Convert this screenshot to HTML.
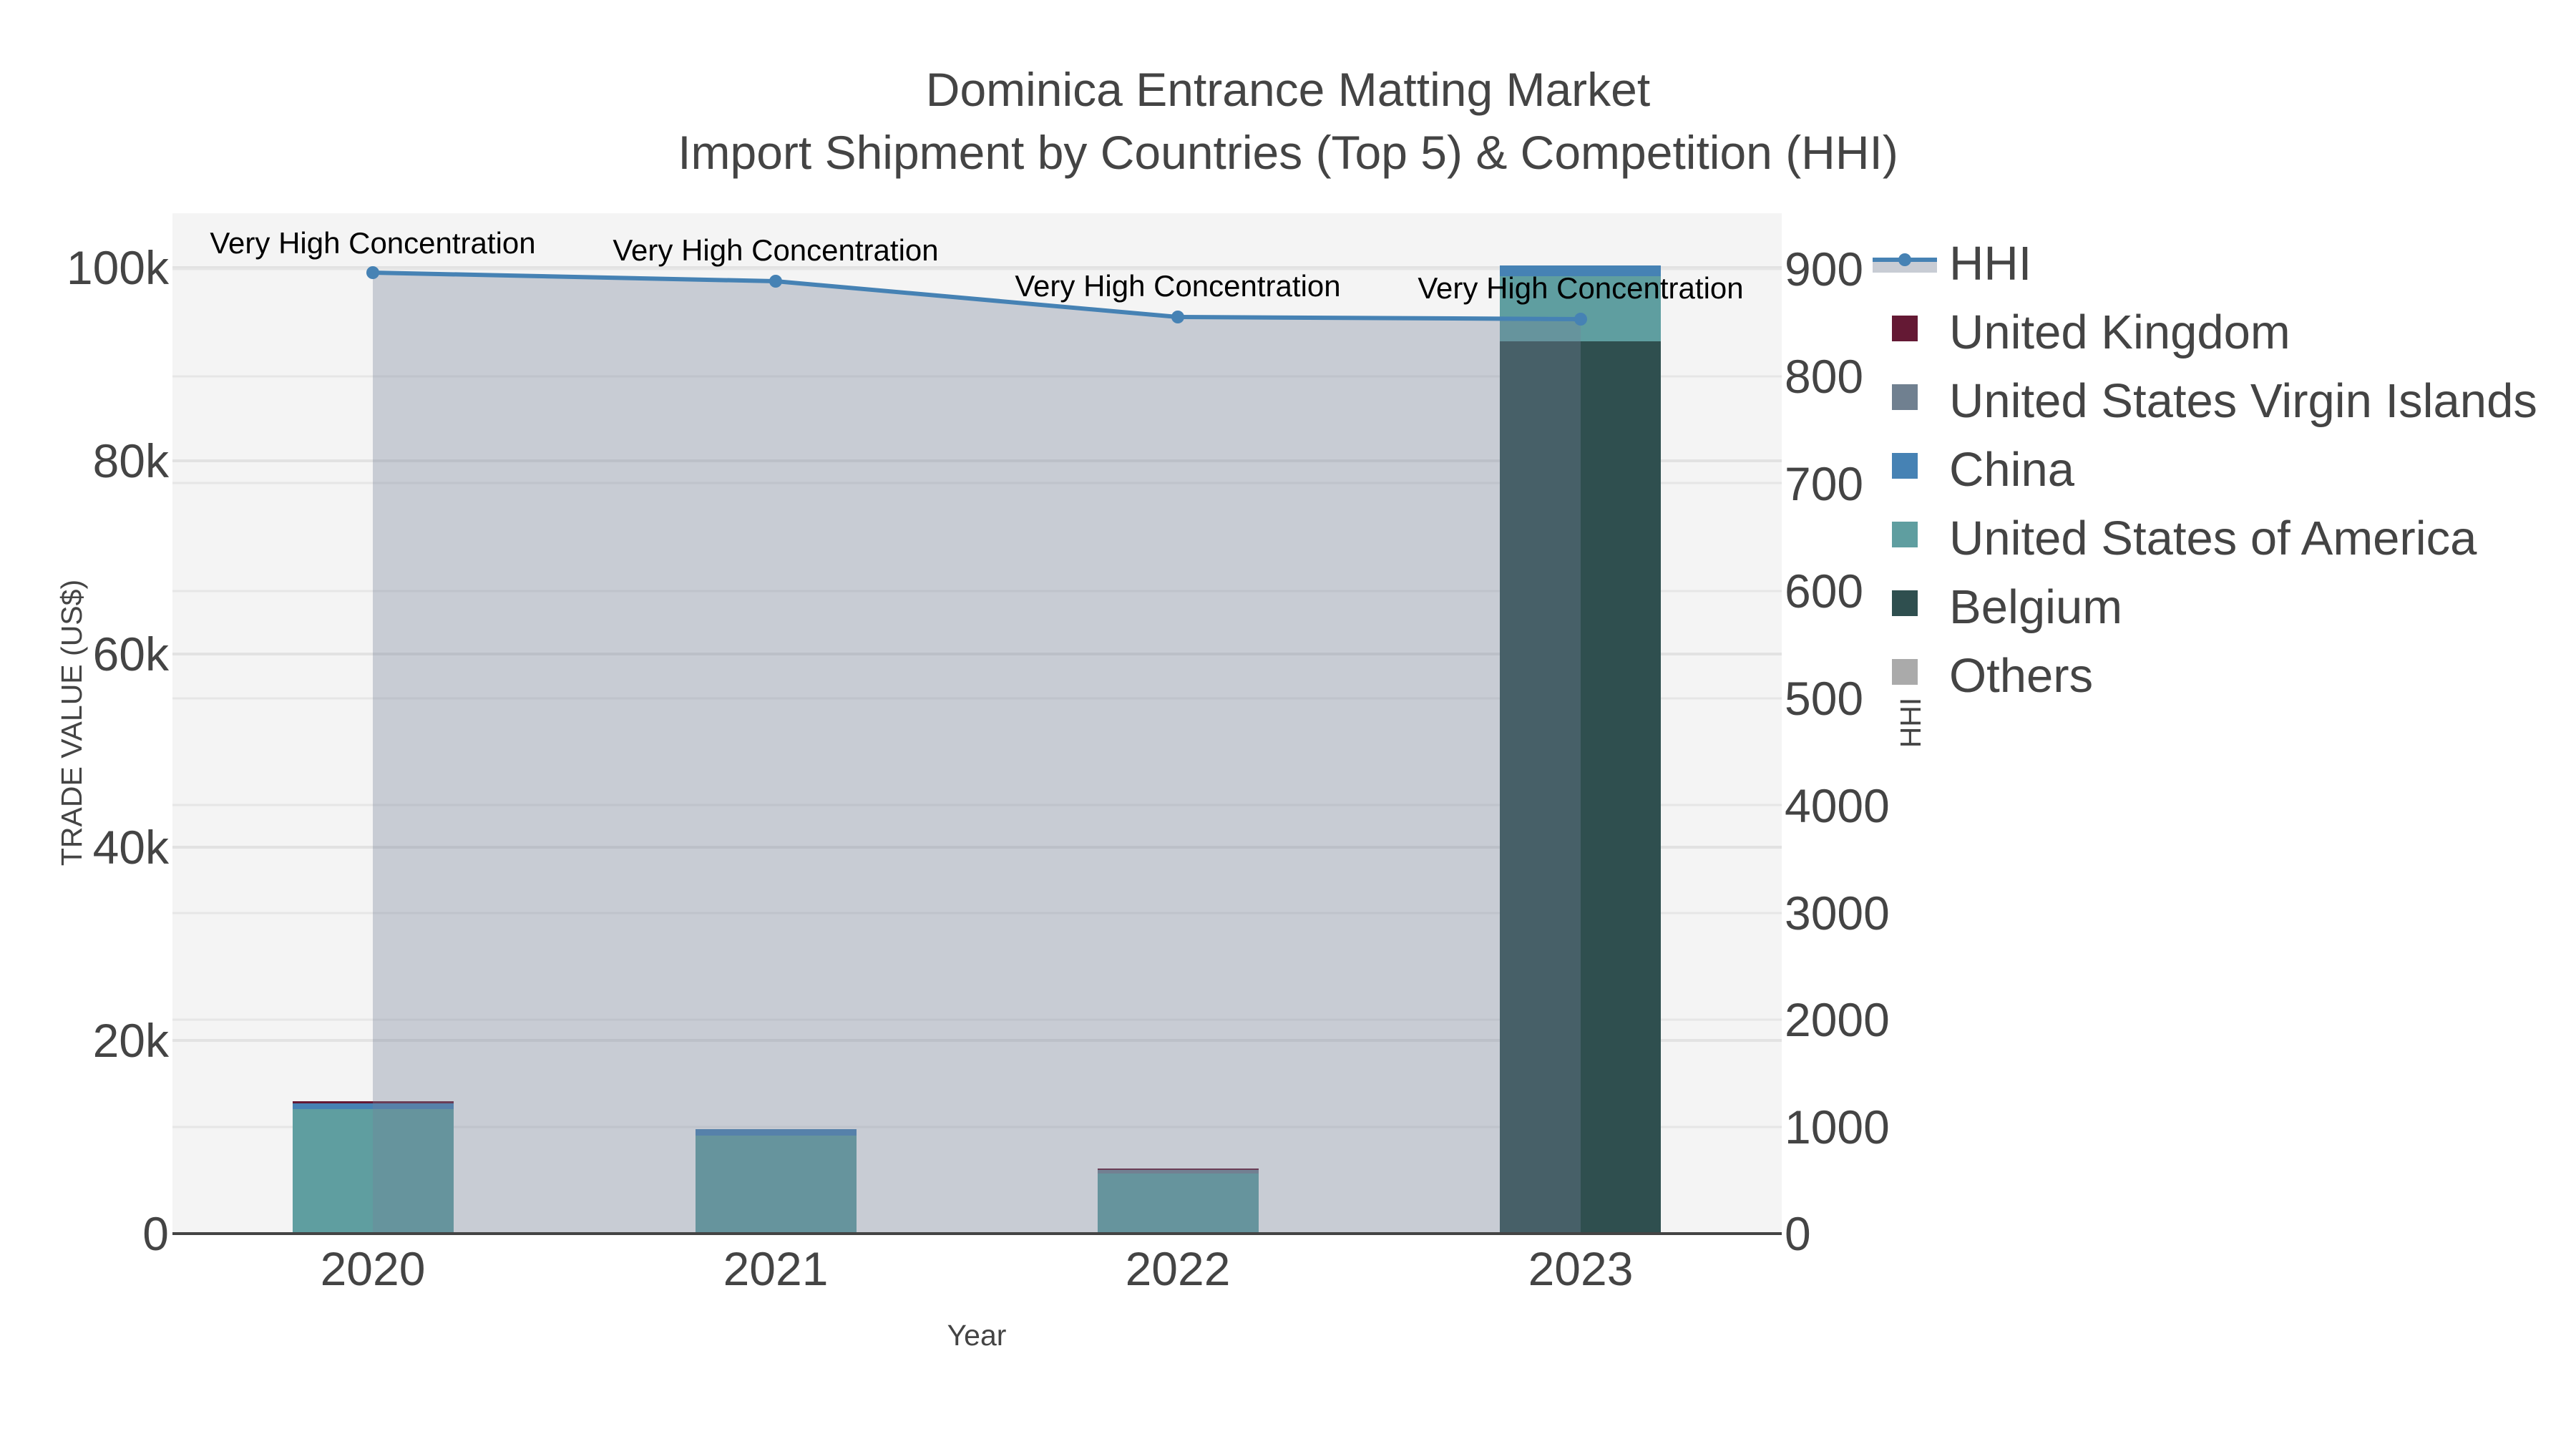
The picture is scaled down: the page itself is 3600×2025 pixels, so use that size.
<!DOCTYPE html>
<html><head><meta charset="utf-8"><style>
html,body{margin:0;padding:0;background:#fff;}
svg{display:block;font-family:"Liberation Sans",sans-serif;}
</style></head><body>
<svg width="3600" height="2025" viewBox="0 0 3600 2025" xmlns="http://www.w3.org/2000/svg">
<rect x="0" y="0" width="3600" height="2025" fill="#fff"/>
<rect x="241" y="298" width="2249" height="1426" fill="#f4f4f4"/>
<g stroke="#e2e2e2" stroke-width="4">
<line x1="241" x2="2490" y1="1454" y2="1454"/>
<line x1="241" x2="2490" y1="1184" y2="1184"/>
<line x1="241" x2="2490" y1="914" y2="914"/>
<line x1="241" x2="2490" y1="644" y2="644"/>
<line x1="241" x2="2490" y1="374" y2="374"/>
</g>
<g stroke="#e6e6e6" stroke-width="3">
<line x1="241" x2="2490" y1="1575" y2="1575"/>
<line x1="241" x2="2490" y1="1425" y2="1425"/>
<line x1="241" x2="2490" y1="1276" y2="1276"/>
<line x1="241" x2="2490" y1="1125" y2="1125"/>
<line x1="241" x2="2490" y1="976" y2="976"/>
<line x1="241" x2="2490" y1="826" y2="826"/>
<line x1="241" x2="2490" y1="675" y2="675"/>
<line x1="241" x2="2490" y1="526" y2="526"/>
<line x1="241" x2="2490" y1="376" y2="376"/>
</g>
<rect x="409" y="1539" width="225" height="3" fill="#641934"/>
<rect x="409" y="1542" width="225" height="8" fill="#4682b4"/>
<rect x="409" y="1550" width="225" height="174" fill="#5f9ea0"/>
<rect x="972" y="1578" width="225" height="9" fill="#4682b4"/>
<rect x="972" y="1587" width="225" height="137" fill="#5f9ea0"/>
<rect x="1534" y="1633" width="225" height="2" fill="#641934"/>
<rect x="1534" y="1635" width="225" height="5" fill="#708090"/>
<rect x="1534" y="1640" width="225" height="84" fill="#5f9ea0"/>
<rect x="2096" y="371" width="225" height="15" fill="#4682b4"/>
<rect x="2096" y="386" width="225" height="91" fill="#5f9ea0"/>
<rect x="2096" y="477" width="225" height="1247" fill="#2f4f4f"/>
<polygon points="521,381 1084,393 1646,443 2209,446 2209,1724 521,1724" fill="rgb(118,130,152)" fill-opacity="0.35"/>
<line x1="241" x2="2490" y1="1724" y2="1724" stroke="#444" stroke-width="4"/>
<polyline points="521,381 1084,393 1646,443 2209,446" fill="none" stroke="#4682b4" stroke-width="6"/>
<g fill="#4682b4"><circle cx="521" cy="381" r="9"/><circle cx="1084" cy="393" r="9"/><circle cx="1646" cy="443" r="9"/><circle cx="2209" cy="446" r="9"/></g>
<g font-size="42" fill="#000" text-anchor="middle">
<text x="521" y="354">Very High Concentration</text>
<text x="1084" y="364">Very High Concentration</text>
<text x="1646" y="414">Very High Concentration</text>
<text x="2209" y="417">Very High Concentration</text>
</g>
<g font-size="66" fill="#444" text-anchor="middle">
<text x="1800" y="148">Dominica Entrance Matting Market</text>
<text x="1800" y="236">Import Shipment by Countries (Top 5) &amp; Competition (HHI)</text>
</g>
<g font-size="66" fill="#444" text-anchor="end">
<text x="236" y="1747">0</text>
<text x="236" y="1477">20k</text>
<text x="236" y="1207">40k</text>
<text x="236" y="937">60k</text>
<text x="236" y="667">80k</text>
<text x="236" y="397">100k</text>
</g>
<g font-size="66" fill="#444">
<text x="2494" y="1747">0</text>
<text x="2494" y="1598">1000</text>
<text x="2494" y="1448">2000</text>
<text x="2494" y="1299">3000</text>
<text x="2494" y="1149">4000</text>
<text x="2494" y="999">500</text>
<text x="2494" y="849">600</text>
<text x="2494" y="699">700</text>
<text x="2494" y="549">800</text>
<text x="2494" y="399">900</text>
</g>
<g font-size="66" fill="#444" text-anchor="middle">
<text x="521" y="1796">2020</text>
<text x="1084" y="1796">2021</text>
<text x="1646" y="1796">2022</text>
<text x="2209" y="1796">2023</text>
</g>
<text x="1365" y="1880" font-size="41" fill="#444" text-anchor="middle">Year</text>
<text transform="translate(114,1010) rotate(-90)" font-size="41" fill="#444" text-anchor="middle">TRADE VALUE (US$)</text>
<text transform="translate(2684,1010) rotate(-90)" font-size="41" fill="#444" text-anchor="middle">HHI</text>
<rect x="2617" y="363" width="90" height="18" fill="#c8ccd4"/>
<line x1="2617" x2="2707" y1="363" y2="363" stroke="#4682b4" stroke-width="6"/>
<circle cx="2662" cy="363" r="9" fill="#4682b4"/>
<rect x="2644" y="441" width="36" height="36" fill="#641934"/>
<rect x="2644" y="537" width="36" height="36" fill="#708090"/>
<rect x="2644" y="633" width="36" height="36" fill="#4682b4"/>
<rect x="2644" y="729" width="36" height="36" fill="#5f9ea0"/>
<rect x="2644" y="825" width="36" height="36" fill="#2f4f4f"/>
<rect x="2644" y="921" width="36" height="36" fill="#aaaaaa"/>
<g font-size="67" fill="#444">
<text x="2724" y="391">HHI</text>
<text x="2724" y="487">United Kingdom</text>
<text x="2724" y="583">United States Virgin Islands</text>
<text x="2724" y="679">China</text>
<text x="2724" y="775">United States of America</text>
<text x="2724" y="871">Belgium</text>
<text x="2724" y="967">Others</text>
</g>
</svg>
</body></html>
